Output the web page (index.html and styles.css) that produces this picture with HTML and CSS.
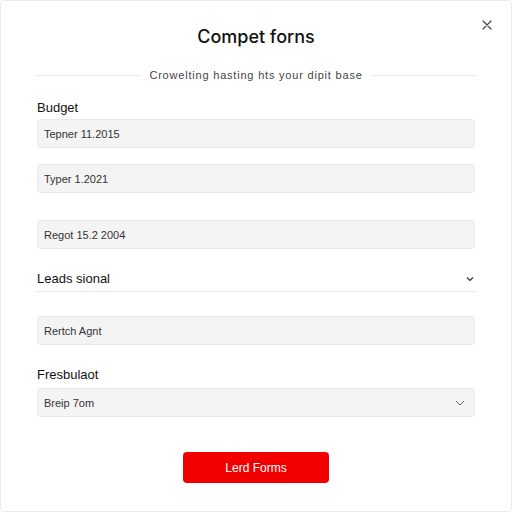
FILE: index.html
```html
<!DOCTYPE html>
<html>
<head>
<meta charset="utf-8">
<link rel="stylesheet" href="styles.css">
</head>
<body>
<div class="modal">
  <button class="close" aria-label="Close">
    <svg width="10" height="10" viewBox="0 0 10 10"><path d="M1 1L9 9M9 1L1 9" stroke="#444" stroke-width="1.2" fill="none" stroke-linecap="round"/></svg>
  </button>
  <h1 class="title">Compet forns</h1>
  <div class="divider"><span class="line"></span><span class="sub">Crowelting hasting hts your dipit base</span><span class="line"></span></div>

  <div class="label first">Budget</div>
  <div class="input">Tepner 11.2015</div>
  <div class="input gap16">Typer 1.2021</div>
  <div class="input gap27">Regot 15.2 2004</div>

  <div class="section">
    <span>Leads sional</span>
    <svg width="8" height="6" viewBox="0 0 8 6"><path d="M1 1.5L4 4.5L7 1.5" stroke="#333" stroke-width="1.2" fill="none"/></svg>
  </div>

  <div class="input gap24">Rertch Agnt</div>

  <div class="label second">Fresbulaot</div>
  <div class="input select">
    <span>Breip 7om</span>
    <svg width="10" height="6" viewBox="0 0 10 6"><path d="M1 1L5 5L9 1" stroke="#666" stroke-width="1" fill="none"/></svg>
  </div>

  <div class="actions"><button class="primary">Lerd Forms</button></div>
</div>
</body>
</html>
```

FILE: styles.css
```css
* { box-sizing: border-box; }
html, body { margin: 0; padding: 0; background: #fff; }
body { font-family: "Liberation Sans", Arial, sans-serif; color: #1d1d1d; }
.modal {
  position: relative;
  width: 512px;
  height: 512px;
  border: 1px solid #ececec;
  border-radius: 4px;
  padding: 24px 36px 0 36px;
  display: flex;
  flex-direction: column;
}
.close {
  position: absolute;
  top: 19px;
  right: 19px;
  border: 0;
  background: none;
  padding: 0;
  width: 10px;
  height: 10px;
  display: flex;
}
.title {
  margin: 0;
  font-family: Inter, "Liberation Sans", sans-serif;
  font-size: 18px;
  line-height: 24px;
  font-weight: 500;
  text-align: center;
  color: #111;
}
.divider {
  margin-top: 19px;
  height: 14px;
  display: flex;
  align-items: center;
  gap: 10px;
}
.line { flex: 1; height: 1px; background: #e4e4e4; }
.sub {
  font-size: 11px;
  color: #444;
  letter-spacing: 0.8px;
  white-space: nowrap;
}
.label {
  font-size: 13px;
  line-height: 16px;
  font-weight: 500;
  color: #111;
}
.label.first { margin-top: 18px; }
.label.second { margin-top: 22px; }
.input {
  height: 29px;
  margin-top: 3px;
  background: #f4f4f4;
  border: 1px solid #e8e8e8;
  border-radius: 4px;
  padding: 0 6px;
  display: flex;
  align-items: center;
  font-size: 11px;
  color: #333;
}
.gap16 { margin-top: 16px; }
.gap27 { margin-top: 27px; }
.gap24 { margin-top: 24px; }
.select { justify-content: space-between; padding-right: 9px; margin-top: 5px; }
.section {
  margin-top: 20px;
  height: 23px;
  border-bottom: 1px solid #e4e4e4;
  display: flex;
  align-items: center;
  justify-content: space-between;
  font-size: 13px;
  font-weight: 500;
  color: #111;
  padding: 0 1px 3px 0;
}
.actions { display: flex; justify-content: center; margin-top: 35px; }
.primary {
  width: 146px;
  height: 31px;
  border: 0;
  border-radius: 4px;
  background: #f20000;
  color: #fff;
  font-family: "Liberation Sans", Arial, sans-serif;
  font-size: 12px;
  font-weight: 500;
}
```
